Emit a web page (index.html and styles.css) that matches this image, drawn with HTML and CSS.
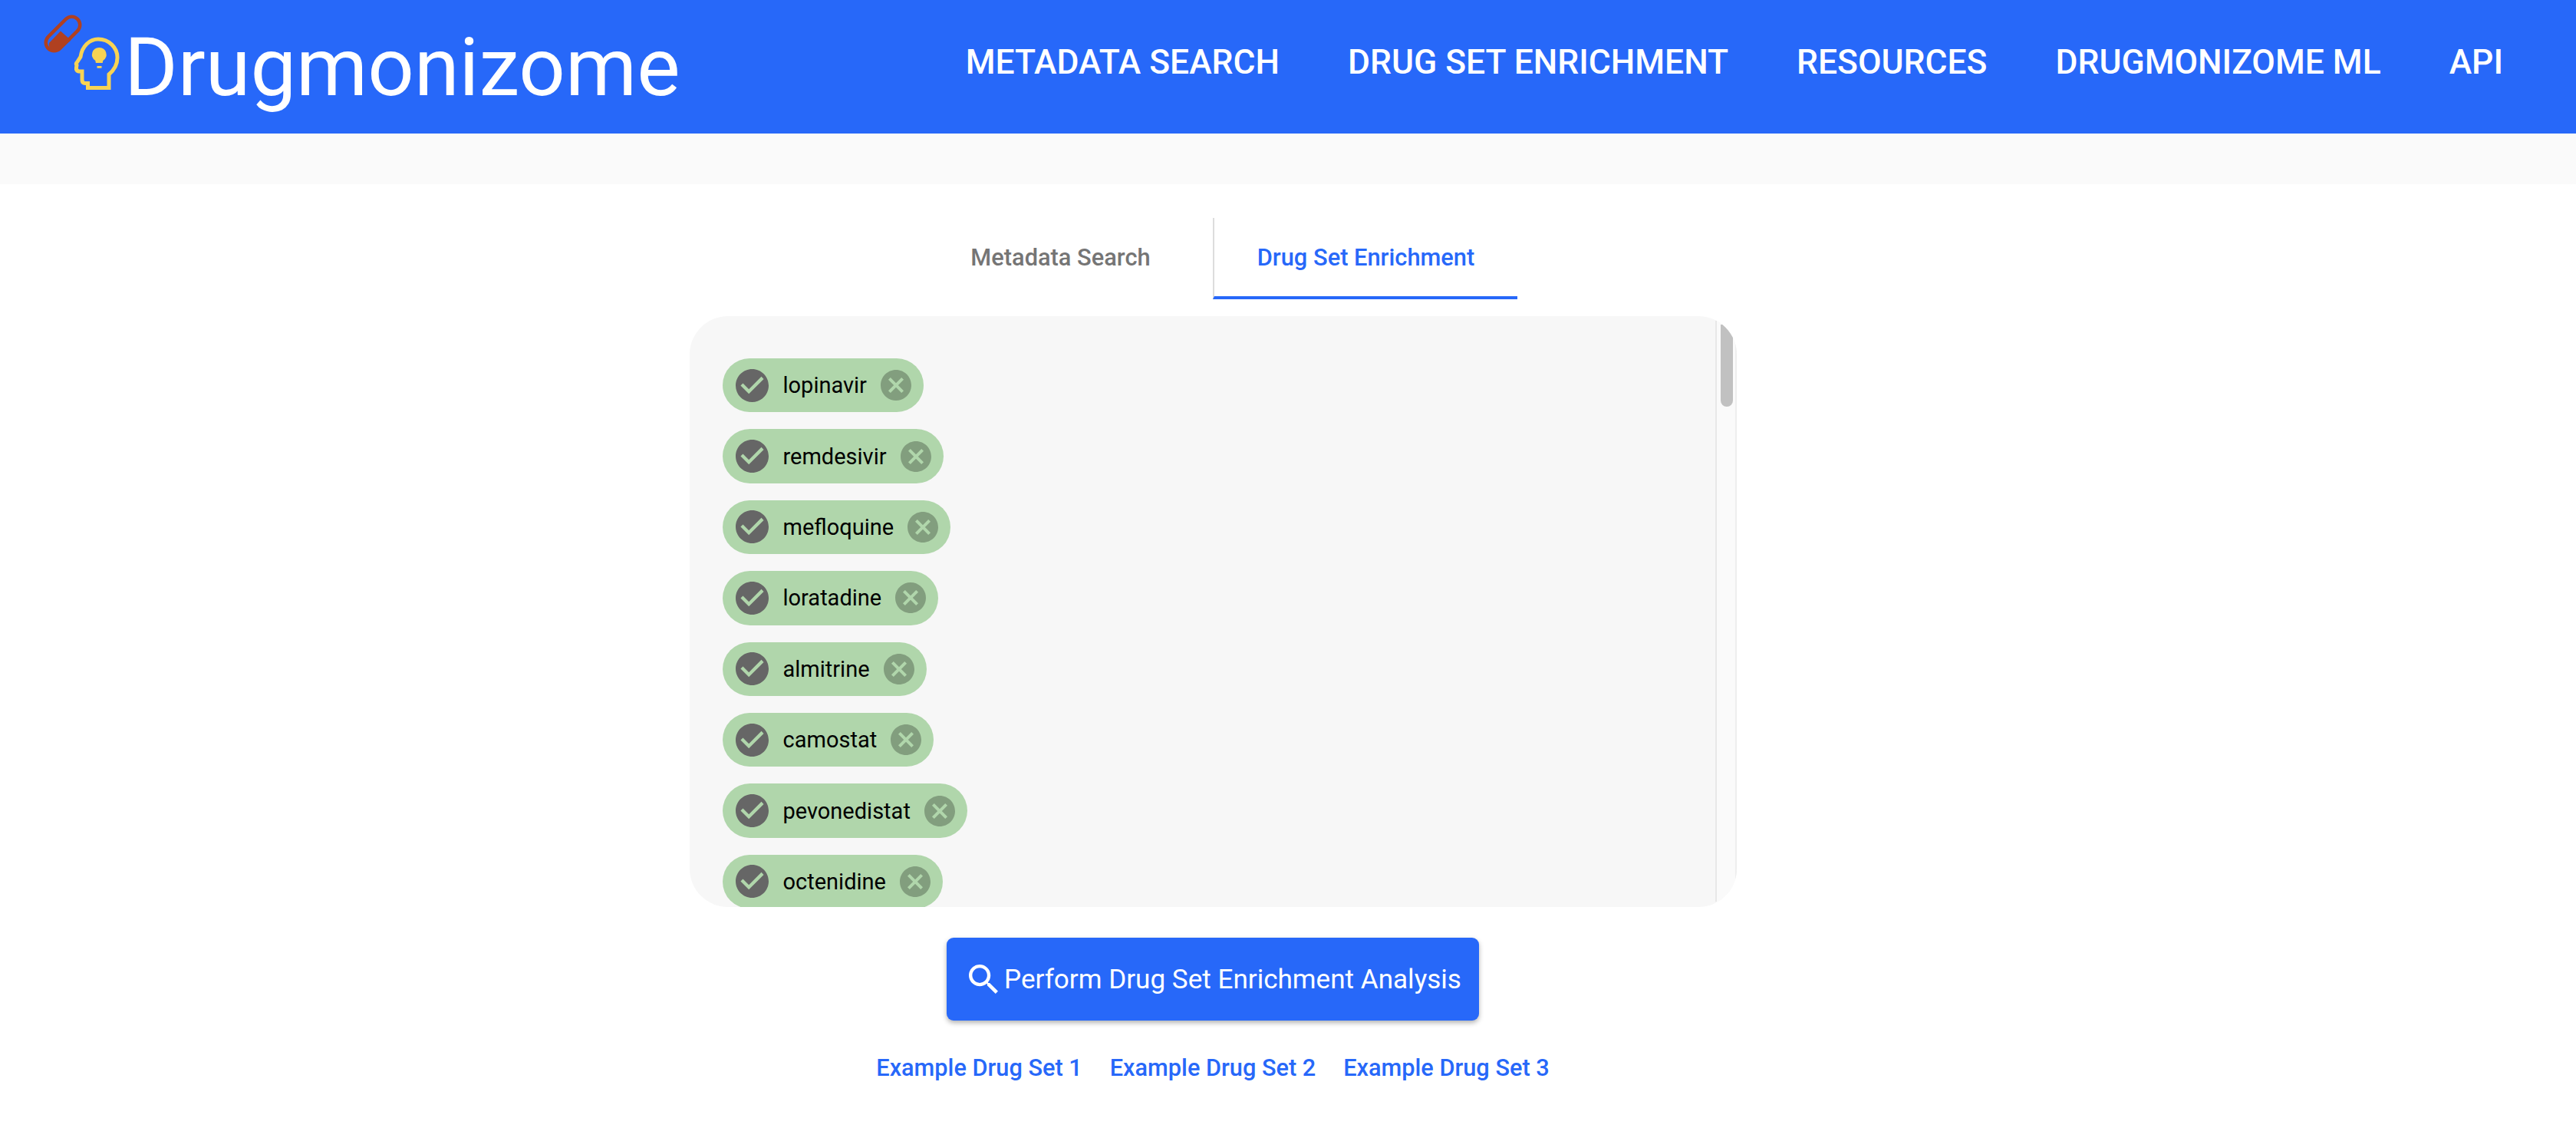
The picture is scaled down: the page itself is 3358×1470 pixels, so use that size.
FILE: index.html
```html
<!DOCTYPE html>
<html lang="en">
  <head>
    <meta charset="UTF-8" />
    <meta name="viewport" content="width=device-width, initial-scale=1.0" />
    <title>Drugmonizome</title>
    <link rel="stylesheet" href="styles.css">
  </head>
  <body>
    <svg class="defs">
      <symbol id="check" viewBox="2 2 20 20">
        <path fill-rule="evenodd" d="M12 2C6.48 2 2 6.48 2 12s4.48 10 10 10 10-4.48 10-10S17.52 2 12 2zm-2 15l-5-5 1.41-1.41L10 14.17l7.59-7.59L19 8l-9 9z" />
      </symbol>
      <symbol id="cancel" viewBox="2 2 20 20">
        <path fill-rule="evenodd" d="M12 2C6.47 2 2 6.47 2 12s4.47 10 10 10 10-4.47 10-10S17.53 2 12 2zm5 13.59L15.59 17 12 13.41 8.41 17 7 15.59 10.59 12 7 8.41 8.41 7 12 10.59 15.59 7 17 8.41 13.41 12 17 15.59z" />
      </symbol>
    </svg>

    <header class="topbar">
      <a class="brand" href="#">
        <svg class="brand-logo" viewBox="56 16 106 104">
          <rect class="pill" x="55" y="33.25" width="54" height="21.5" rx="10.75" transform="rotate(-45 82 44)" />
          <path class="pill-fill" d="M64 56L79 40.5 92.5 52.5 76 66Q70 68 66 64 63 60 64 56Z" />
          <path class="head" d="M114.5 114.5V108.5H111Q107 108.5 107 104V93H102.5Q99 92 99.5 88L100 85Q98.5 83 100.5 81L105 74C107 60 117 51 128 51 142 51 153 62 153 75 153 84 149 91 142 97V114.5Z" />
          <path class="bulb" d="M129.3 62a9.2 9.2 0 0 1 5 17l-.6 3h-8.8l-.6-3a9.2 9.2 0 0 1 5-17zM126.5 86h6v2.8h-6z" />
        </svg>
        <span class="brand-name">Drugmonizome</span>
      </a>
      <nav class="topnav">
        <a href="#">METADATA SEARCH</a>
        <a href="#">DRUG SET ENRICHMENT</a>
        <a href="#">RESOURCES</a>
        <a href="#">DRUGMONIZOME ML</a>
        <a href="#">API</a>
      </nav>
    </header>

    <div class="band"></div>

    <main class="main">
      <div class="tabs">
        <a class="tab" href="#">Metadata Search</a>
        <a class="tab active" href="#">Drug Set Enrichment</a>
      </div>

      <div class="panel">
        <div class="chips">
          <div class="chip"><svg class="chip-check"><use href="#check" /></svg><span>lopinavir</span><svg class="chip-del"><use href="#cancel" /></svg></div>
          <div class="chip"><svg class="chip-check"><use href="#check" /></svg><span>remdesivir</span><svg class="chip-del"><use href="#cancel" /></svg></div>
          <div class="chip"><svg class="chip-check"><use href="#check" /></svg><span>mefloquine</span><svg class="chip-del"><use href="#cancel" /></svg></div>
          <div class="chip"><svg class="chip-check"><use href="#check" /></svg><span>loratadine</span><svg class="chip-del"><use href="#cancel" /></svg></div>
          <div class="chip"><svg class="chip-check"><use href="#check" /></svg><span>almitrine</span><svg class="chip-del"><use href="#cancel" /></svg></div>
          <div class="chip"><svg class="chip-check"><use href="#check" /></svg><span>camostat</span><svg class="chip-del"><use href="#cancel" /></svg></div>
          <div class="chip"><svg class="chip-check"><use href="#check" /></svg><span>pevonedistat</span><svg class="chip-del"><use href="#cancel" /></svg></div>
          <div class="chip"><svg class="chip-check"><use href="#check" /></svg><span>octenidine</span><svg class="chip-del"><use href="#cancel" /></svg></div>
        </div>
        <div class="scrollbar"><div class="thumb"></div></div>
      </div>

      <a class="submit" href="#">
        <svg class="submit-icon" viewBox="3 3 17.5 17.5"><path d="M15.5 14h-.79l-.28-.27C15.41 12.59 16 11.11 16 9.5 16 5.91 13.09 3 9.5 3S3 5.91 3 9.5 5.91 16 9.5 16c1.61 0 3.09-.59 4.23-1.57l.27.28v.79l5 4.99L20.49 19l-4.99-5zm-6 0C7.01 14 5 11.99 5 9.5S7.01 5 9.5 5 14 7.01 14 9.5 11.99 14 9.5 14z" /></svg>
        Perform Drug Set Enrichment Analysis
      </a>

      <div class="examples">
        <a href="#">Example Drug Set 1</a>
        <a href="#">Example Drug Set 2</a>
        <a href="#">Example Drug Set 3</a>
      </div>
    </main>
  </body>
</html>
```

FILE: styles.css
```css
html,
body {
  height: 100%;
  margin: 0;
  overflow: hidden;
}
body {
  background: #ffffff;
  font-family: Roboto, "Liberation Sans", sans-serif;
}
a {
  color: inherit;
  text-decoration: none;
}
.defs {
  display: none;
}

.topbar {
  display: flex;
  justify-content: space-between;
  height: 174px;
  padding: 0 95px 0 56px;
  background: #2768f9;
  color: #ffffff;
}
.brand {
  display: flex;
  align-items: flex-start;
}
.brand-logo {
  width: 106px;
  height: 104px;
  margin-top: 16px;
  flex: none;
}
.brand-name {
  margin: 26px 0 0 0;
  font-size: 106.3px;
  line-height: 123px;
  font-weight: 400;
}
.pill {
  fill: none;
  stroke: #b04020;
  stroke-width: 4.5;
}
.pill-fill {
  fill: #b04020;
}
.head {
  fill: none;
  stroke: #f7d354;
  stroke-width: 5;
}
.bulb {
  fill: #f7d354;
}
.topnav {
  display: flex;
  gap: 89px;
  padding-top: 56px;
  font-size: 44.4px;
  line-height: 50px;
  font-weight: 500;
}

.band {
  height: 66px;
  background: #fafafa;
}

.main {
  display: flex;
  flex-direction: column;
  align-items: center;
  padding-right: 196px;
}

.tabs {
  display: flex;
  margin-top: 44px;
}
.tab {
  box-sizing: border-box;
  display: flex;
  align-items: center;
  justify-content: center;
  width: 397px;
  height: 106px;
  padding-bottom: 4px;
  font-size: 30.8px;
  font-weight: 500;
  color: #757575;
}
.tab.active {
  border-left: 2px solid #dddddd;
  border-bottom: 4px solid #2768f9;
  padding-bottom: 0;
  color: #2768f9;
}

.panel {
  display: flex;
  width: 1365px;
  height: 770px;
  margin-top: 22px;
  border-radius: 50px;
  background: #f7f7f7;
  overflow: hidden;
}
.chips {
  flex: 1;
  display: flex;
  flex-direction: column;
  align-items: flex-start;
  gap: 22px;
  padding: 55px 0 0 43px;
}
.chip {
  display: flex;
  align-items: center;
  flex: none;
  height: 70.4px;
  padding: 0 16px 0 17px;
  border-radius: 36px;
  background: #b0d6ab;
  font-size: 29px;
  color: #000000;
}
.chip span {
  margin: 0 18px 0 19px;
}
.chip-check {
  width: 43px;
  height: 43px;
  fill: #666666;
}
.chip-del {
  width: 40px;
  height: 40px;
  fill: rgba(0, 0, 0, 0.26);
}

.scrollbar {
  box-sizing: border-box;
  flex: none;
  width: 28px;
  margin: 6px 0 7px;
  padding: 5px 5px 0 5px;
  border-left: 2px solid #e8e8e8;
  border-right: 2px solid #eeeeee;
  background: #fafafa;
}
.thumb {
  width: 16px;
  height: 107px;
  border-radius: 0 0 8px 8px;
  background: #c1c1c1;
}

.submit {
  box-sizing: border-box;
  display: flex;
  align-items: center;
  gap: 8px;
  width: 694px;
  height: 108px;
  margin-top: 40px;
  padding: 0 0 0 29px;
  border-radius: 9px;
  background: #2768f9;
  color: #ffffff;
  font-size: 35.1px;
  box-shadow: 0 3px 6px rgba(0, 0, 0, 0.3);
}
.submit-icon {
  width: 38px;
  height: 38px;
  fill: #ffffff;
  flex: none;
}

.examples {
  display: flex;
  gap: 36px;
  margin-top: 44px;
  font-size: 30.7px;
  line-height: 36px;
  font-weight: 500;
  color: #2768f9;
}
```
